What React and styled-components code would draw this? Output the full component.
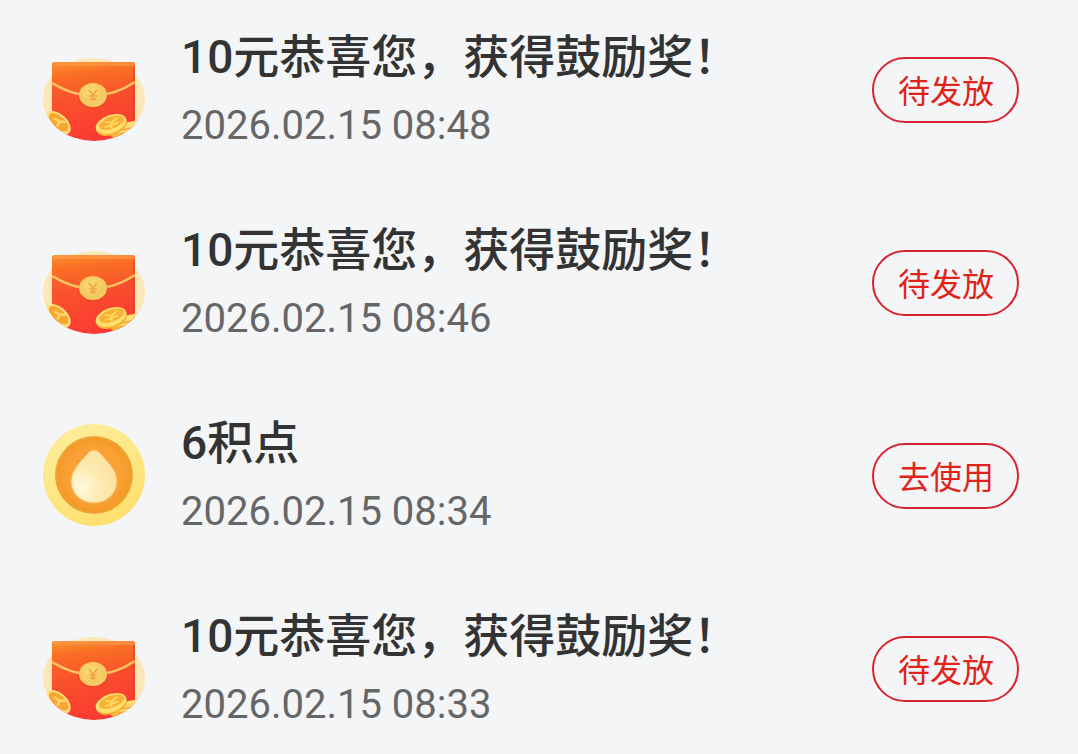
import React from 'react';
import styled, { createGlobalStyle } from 'styled-components';

const GlobalStyle = createGlobalStyle`
  body {
    margin: 0;
    background: #f4f5f7;
    font-family: Roboto, 'Noto Sans CJK SC', sans-serif;
  }
`;

const List = styled.ul`
  margin: 0;
  padding: 0;
  list-style: none;
  overflow: hidden;
`;

const Record = styled.li`
  display: flex;
  align-items: center;
  height: 193px;
  padding: 0 59px 0 42px;
  box-sizing: border-box;

  // The first record sits closer to the top of the list
  &:first-child {
    margin-top: -7px;
  }
`;

const Icon = styled.svg`
  flex: none;
  width: 104px;
  height: 104px;
  margin-right: 35px;
`;

const Info = styled.div`
  flex: 1;
  min-width: 0;
  padding-top: 4px;
`;

const Title = styled.h2`
  margin: 0;
  font-size: 46px;
  line-height: 68px;
  font-weight: 500;
  color: #333;
`;

const Time = styled.time`
  display: block;
  font-size: 40px;
  line-height: 70px;
  color: #666;
`;

const StatusButton = styled.button`
  flex: none;
  height: 66px;
  padding: 4px 23px 0 24px;
  border: 2px solid #d9232e;
  border-radius: 33px;
  background: transparent;
  color: #e2231a;
  font-family: inherit;
  font-size: 32px;
  line-height: 58px;
  cursor: pointer;
`;

const RedPacketIcon = ({ id }) => (
  <Icon viewBox="0 0 104 104" aria-hidden="true">
    <defs>
      <linearGradient id={`paper-${id}`} x1="0.3" y1="0" x2="0.6" y2="1">
        <stop offset="0" stopColor="#f8702a" />
        <stop offset="0.4" stopColor="#f9522b" />
        <stop offset="1" stopColor="#fb3733" />
      </linearGradient>
      <linearGradient id={`flap-${id}`} x1="0.1" y1="0" x2="0.4" y2="1">
        <stop offset="0" stopColor="#fb9028" />
        <stop offset="0.4" stopColor="#f96d25" />
        <stop offset="1" stopColor="#f9562a" />
      </linearGradient>
      <radialGradient id={`gold-${id}`} cx="0.4" cy="0.35" r="0.7">
        <stop offset="0" stopColor="#fbd873" />
        <stop offset="0.7" stopColor="#f6c860" />
        <stop offset="1" stopColor="#f3cf6c" />
      </radialGradient>
      <clipPath id={`base-${id}`}>
        <path d="M1 18H103V61A51 42 0 0 1 1 61Z" />
      </clipPath>
    </defs>
    <ellipse cx="52" cy="61" rx="51" ry="41" fill="#fde6b8" />
    <g clipPath={`url(#base-${id})`}>
      <path d="M10 27Q10 24 13 24H90Q93 24 93 27V104H10Z" fill={`url(#paper-${id})`} />
      <path d="M10 27Q10 24 13 24H90Q93 24 93 27V44Q52 72 10 45Z" fill={`url(#flap-${id})`} />
      <path d="M12 24H91L92 28H11Z" fill="#ffa15a" opacity="0.45" />
      <path d="M92 28V86" fill="none" stroke="#d9421f" strokeWidth="2" opacity="0.55" />
      <path d="M10 45Q52 71 93 44" fill="none" stroke="#fbc562" strokeWidth="2.4" />
      <ellipse cx="51" cy="59" rx="15" ry="12" fill="#d9441f" opacity="0.35" />
      <ellipse cx="51" cy="57" rx="14" ry="12" fill={`url(#gold-${id})`} />
      <path d="M47 52L51 57L55 52M51 57V63M47 58H55M48 61H54" fill="none" stroke="#f0a044" strokeWidth="1.4" />
      <g transform="rotate(42 16 85)">
        <ellipse cx="16" cy="85" rx="15" ry="9" fill="#ffe07c" />
        <ellipse cx="16" cy="84" rx="12" ry="6" fill="#f9a530" />
        <path d="M10 84L16 83L18 88M16 83L21 79" fill="none" stroke="#ffd768" strokeWidth="2.5" />
      </g>
      <ellipse cx="83" cy="93" rx="15" ry="7" fill="#f7b53f" transform="rotate(-14 83 93)" />
      <ellipse cx="87" cy="89" rx="16" ry="5" fill="#ffdc74" transform="rotate(-14 87 89)" />
      <path d="M75 92Q86 92 95 88M77 96Q88 95 95 90" fill="none" stroke="#f6a836" strokeWidth="1.6" />
      <g transform="rotate(-20 69 86)">
        <ellipse cx="69" cy="88" rx="16" ry="9" fill="#f7b033" />
        <ellipse cx="69" cy="86" rx="16" ry="9" fill="#ffe06e" />
        <ellipse cx="70" cy="85" rx="13" ry="6" fill="#fbb035" />
        <path d="M64 82L70 85L77 82M70 85L68 90M62 87H76" fill="none" stroke="#ffd962" strokeWidth="1.8" />
      </g>
    </g>
  </Icon>
);

const PointsIcon = ({ id }) => (
  <Icon viewBox="0 0 104 104" aria-hidden="true">
    <defs>
      <linearGradient id={`ring-${id}`} x1="0.2" y1="0" x2="0.7" y2="1">
        <stop offset="0" stopColor="#fdee9c" />
        <stop offset="1" stopColor="#fedf6c" />
      </linearGradient>
      <radialGradient id={`disc-${id}`}>
        <stop offset="0.7" stopColor="#f9a136" />
        <stop offset="0.92" stopColor="#f59a28" />
        <stop offset="1" stopColor="#e8a83c" />
      </radialGradient>
      <radialGradient id={`drop-${id}`} cx="0.25" cy="0.7" r="0.8">
        <stop offset="0" stopColor="#fff9dc" />
        <stop offset="0.5" stopColor="#feeab0" />
        <stop offset="1" stopColor="#fce0a0" />
      </radialGradient>
    </defs>
    <circle cx="52" cy="51" r="51" fill={`url(#ring-${id})`} />
    <circle cx="52" cy="51" r="39" fill={`url(#disc-${id})`} />
    <path
      d="M47 28Q52 24 57 28C66 38 75 46 75 57C75 70 65 79 52 79S29 70 29 57C29 46 38 38 47 28Z"
      fill={`url(#drop-${id})`}
      stroke="#f8b659"
    />
  </Icon>
);

const records = [
  { id: 1, type: 'packet', title: '10元恭喜您，获得鼓励奖！', time: '2026.02.15 08:48', status: '待发放' },
  { id: 2, type: 'packet', title: '10元恭喜您，获得鼓励奖！', time: '2026.02.15 08:46', status: '待发放' },
  { id: 3, type: 'points', title: '6积点', time: '2026.02.15 08:34', status: '去使用' },
  { id: 4, type: 'packet', title: '10元恭喜您，获得鼓励奖！', time: '2026.02.15 08:33', status: '待发放' },
];

const App = () => {
  return (
    <>
      <GlobalStyle />
      <List>
        {records.map(record => (
          <Record key={record.id}>
            {record.type === 'packet' ? <RedPacketIcon id={record.id} /> : <PointsIcon id={record.id} />}
            <Info>
              <Title lang="zh-CN">{record.title}</Title>
              <Time>{record.time}</Time>
            </Info>
            <StatusButton type="button">{record.status}</StatusButton>
          </Record>
        ))}
      </List>
    </>
  );
};

export default App;
